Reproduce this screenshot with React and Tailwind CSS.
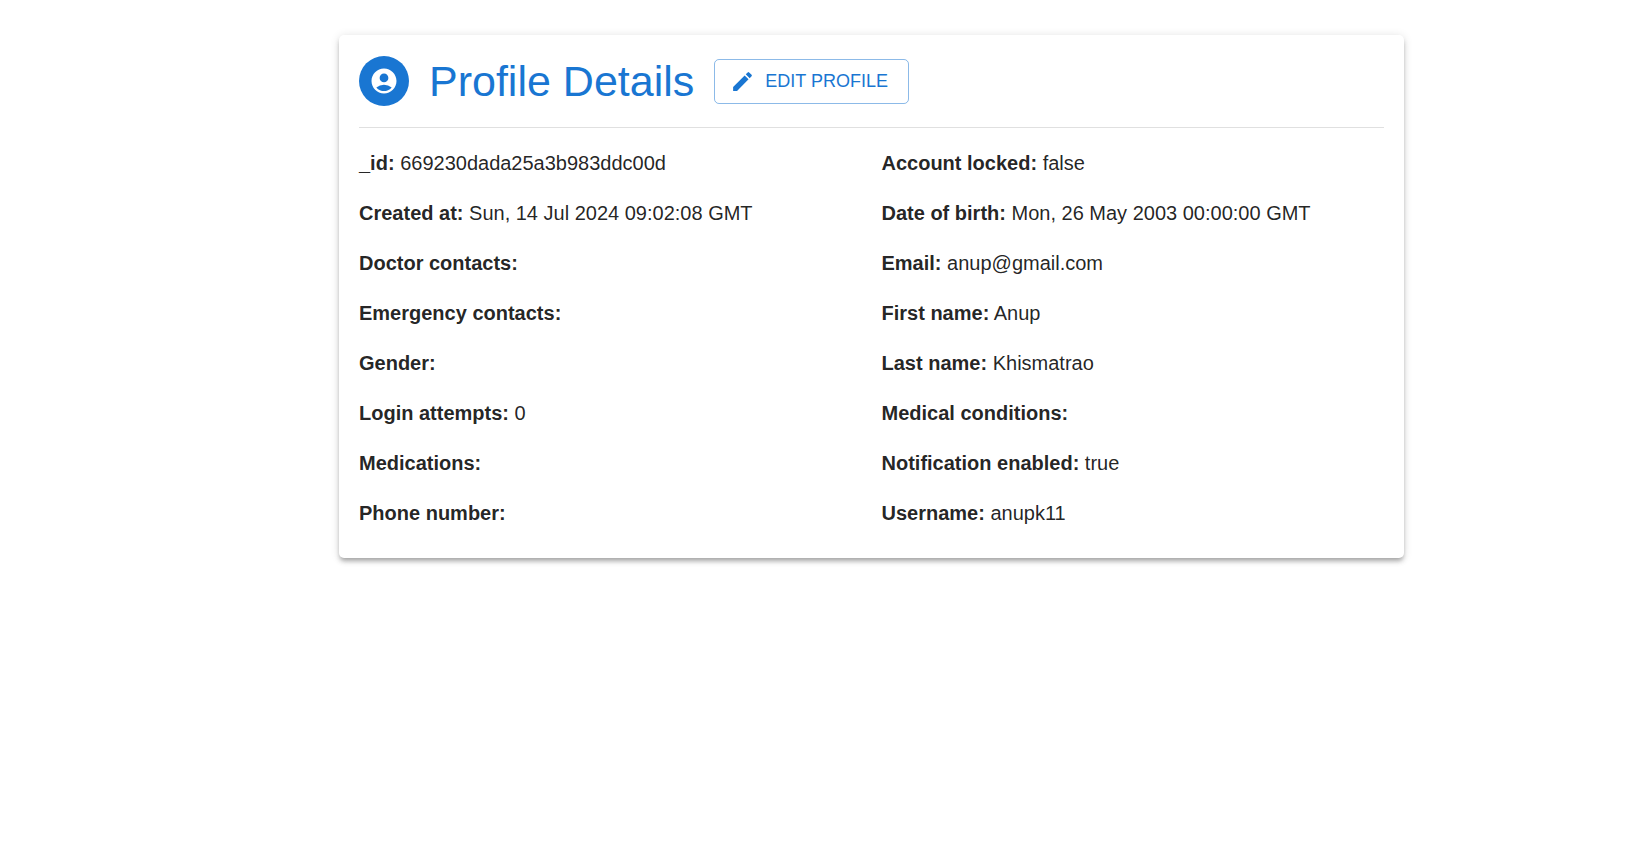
import React from 'react';
import { MdAccountCircle, MdEdit } from 'react-icons/md';

const profileFields = [
  { label: '_id', value: '669230dada25a3b983ddc00d' },
  { label: 'Account locked', value: 'false' },
  { label: 'Created at', value: 'Sun, 14 Jul 2024 09:02:08 GMT' },
  { label: 'Date of birth', value: 'Mon, 26 May 2003 00:00:00 GMT' },
  { label: 'Doctor contacts', value: '' },
  { label: 'Email', value: 'anup@gmail.com' },
  { label: 'Emergency contacts', value: '' },
  { label: 'First name', value: 'Anup' },
  { label: 'Gender', value: '' },
  { label: 'Last name', value: 'Khismatrao' },
  { label: 'Login attempts', value: '0' },
  { label: 'Medical conditions', value: '' },
  { label: 'Medications', value: '' },
  { label: 'Notification enabled', value: 'true' },
  { label: 'Phone number', value: '' },
  { label: 'Username', value: 'anupk11' },
];

const ProfileHeader = () => (
  <div className="flex items-center gap-5 border-b border-black/12 pb-5">
    <div className="flex size-[50px] shrink-0 items-center justify-center rounded-full bg-[#1976d2] text-white">
      <MdAccountCircle className="size-[30px]" />
    </div>
    <h1 className="text-[43px] leading-[52px] text-[#1976d2]">Profile Details</h1>
    <button
      type="button"
      className="flex items-center gap-[10px] rounded-[5px] border border-[#1976d2]/50 py-[6px] pr-5 pl-[15px] text-lg leading-[31px] text-[#1976d2] uppercase hover:bg-[#1976d2]/5"
    >
      <MdEdit className="size-[25px]" />
      Edit Profile
    </button>
  </div>
);

const ProfileField = ({ label, value }) => (
  <p className="text-xl leading-[30px]">
    <strong className="font-bold">{label}:</strong> {value}
  </p>
);

const App = () => (
  <main className="min-h-screen bg-white pt-[35px] pl-[103px] font-['Liberation_Sans',Arial,sans-serif] text-black/87">
    {/* Profile card */}
    <section className="mx-auto max-w-[1065px] rounded-[5px] bg-white px-5 pt-5 pb-[30px] shadow-[0_4px_4px_-2px_rgba(0,0,0,0.2),0_4px_5px_0_rgba(0,0,0,0.14),0_1px_10px_0_rgba(0,0,0,0.12)]">
      <ProfileHeader />
      <div className="mt-5 grid grid-cols-1 gap-5 md:grid-cols-2">
        {profileFields.map((field) => (
          <ProfileField key={field.label} label={field.label} value={field.value} />
        ))}
      </div>
    </section>
  </main>
);

export default App;
